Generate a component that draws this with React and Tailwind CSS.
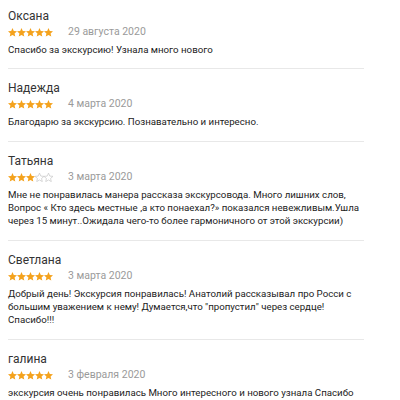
import React from "react";

const reviews = [
  { name: "Оксана", rating: 5, date: "29 августа 2020", text: "Спасибо за экскурсию! Узнала много нового" },
  { name: "Надежда", rating: 5, date: "4 марта 2020", text: "Благодарю за экскурсию. Познавательно и интересно." },
  { name: "Татьяна", rating: 3, date: "3 марта 2020", text: "Мне не понравилась манера рассказа экскурсовода. Много лишних слов, Вопрос « Кто здесь местные ,а кто понаехал?» показался невежливым.Ушла через 15 минут..Ожидала чего-то более гармоничного от этой экскурсии)" },
  { name: "Светлана", rating: 5, date: "3 марта 2020", text: "Добрый день! Экскурсия понравилась! Анатолий рассказывал про Росси с большим уважением к нему! Думается,что \"пропустил\" через сердце! Спасибо!!!" },
  { name: "галина", rating: 5, date: "3 февраля 2020", text: "экскурсия очень понравилась Много интересного и нового узнала Спасибо" },
];

function Star({ filled }) {
  return (
    <svg width="9" height="9" viewBox="2 2.5 20 19.5" className="shrink-0">
      <path
        d="M12 2.5l2.9 6.6 7.1.6-5.4 4.7 1.6 7-6.2-3.7-6.2 3.7 1.6-7L2 9.7l7.1-.6z"
        fill={filled ? "#f4a21d" : "none"}
        stroke={filled ? "#f4a21d" : "#c8c8c8"}
        strokeWidth={filled ? 0 : 1.6}
      />
    </svg>
  );
}

export default function App() {
  return (
    <div className="bg-white w-[400px] h-[400px] overflow-hidden px-2 font-['Roboto',sans-serif]">
      <div className="w-[356px]">
        {reviews.map((r, i) => (
          <div
            key={i}
            className={`${i === 0 ? "pt-[7px] pb-3" : "pt-2.5 pb-[13px]"} border-b border-[#e8e8e8]`}
          >
            <div className="text-[12px] leading-[18px] text-[#333]">{r.name}</div>
            <div className="flex items-center h-[14px]">
              <div className="flex w-[45px]">
                {[0, 1, 2, 3, 4].map((k) => (
                  <Star key={k} filled={k < r.rating} />
                ))}
              </div>
              <span className="ml-[15px] text-[10.5px] leading-[14px] text-[#9a9a9a]">{r.date}</span>
            </div>
            <div className="mt-1 text-[9.7px] leading-[13px] text-[#222]">{r.text}</div>
          </div>
        ))}
      </div>
    </div>
  );
}
